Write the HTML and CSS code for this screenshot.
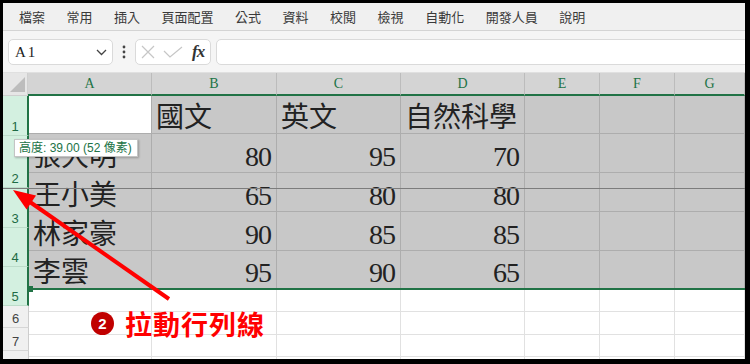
FILE: index.html
```html
<!DOCTYPE html>
<html lang="zh-Hant">

<head>
    <meta charset="UTF-8">
    <meta name="viewport" content="width=device-width, initial-scale=1.0">
    <title>Excel 拉動行列線</title>
    <link rel="stylesheet" href="styles.css">
</head>

<body>
    <div class="shot">
        <div class="app">
            <nav class="ribbon">
                <span>檔案</span>
                <span>常用</span>
                <span>插入</span>
                <span>頁面配置</span>
                <span>公式</span>
                <span>資料</span>
                <span>校閱</span>
                <span>檢視</span>
                <span>自動化</span>
                <span>開發人員</span>
                <span>說明</span>
            </nav>

            <div class="formula-bar">
                <div class="name-box">
                    <span class="ref">A1</span>
                    <svg width="11" height="7" viewBox="0 0 11 7">
                        <path d="M1 1 L5.5 5.5 L10 1" fill="none" stroke="#444" stroke-width="1.3" />
                    </svg>
                </div>
                <div class="dots">
                    <svg width="4" height="14" viewBox="0 0 4 14">
                        <circle cx="2" cy="2" r="1.4" fill="#444" />
                        <circle cx="2" cy="7" r="1.4" fill="#444" />
                        <circle cx="2" cy="12" r="1.4" fill="#444" />
                    </svg>
                </div>
                <div class="fn-box">
                    <svg class="cancel" width="14" height="14" viewBox="0 0 14 14">
                        <path d="M1 1 L13 13 M13 1 L1 13" stroke="#c6c6c6" stroke-width="1.2" />
                    </svg>
                    <svg class="enter" width="20" height="12" viewBox="0 0 20 12">
                        <path d="M1 5 L7 11 L19 1" fill="none" stroke="#c6c6c6" stroke-width="1.2" />
                    </svg>
                    <span class="fx">fx</span>
                </div>
                <div class="fn-input"></div>
            </div>

            <div class="sheet">
                <div class="col-heads">
                    <div class="corner">
                        <svg width="26" height="21" viewBox="0 0 26 21">
                            <polygon points="7,19 22,4 22,19" fill="#bdbdbd" />
                        </svg>
                    </div>
                    <div class="ch">A</div>
                    <div class="ch">B</div>
                    <div class="ch">C</div>
                    <div class="ch">D</div>
                    <div class="ch">E</div>
                    <div class="ch">F</div>
                    <div class="ch">G</div>
                </div>

                <div class="body">
                    <div class="row-heads">
                        <div class="rh on h40">1</div>
                        <div class="rh on h52">2</div>
                        <div class="rh on h40">3</div>
                        <div class="rh on h39">4</div>
                        <div class="rh on h39">5</div>
                        <div class="rh h22">6</div>
                        <div class="rh h23">7</div>
                        <div class="rh h22">8</div>
                    </div>

                    <div class="cells">
                        <div class="sel">
                            <div class="row h38">
                                <div class="c active"></div>
                                <div class="c t">國文</div>
                                <div class="c t">英文</div>
                                <div class="c t">自然科學</div>
                                <div class="c"></div>
                                <div class="c"></div>
                                <div class="c"></div>
                            </div>
                            <div class="row h39">
                                <div class="c t">張大明</div>
                                <div class="c n">80</div>
                                <div class="c n">95</div>
                                <div class="c n">70</div>
                                <div class="c"></div>
                                <div class="c"></div>
                                <div class="c"></div>
                            </div>
                            <div class="row h39">
                                <div class="c t">王小美</div>
                                <div class="c n">65</div>
                                <div class="c n">80</div>
                                <div class="c n">80</div>
                                <div class="c"></div>
                                <div class="c"></div>
                                <div class="c"></div>
                            </div>
                            <div class="row h39">
                                <div class="c t">林家豪</div>
                                <div class="c n">90</div>
                                <div class="c n">85</div>
                                <div class="c n">85</div>
                                <div class="c"></div>
                                <div class="c"></div>
                                <div class="c"></div>
                            </div>
                            <div class="row h37">
                                <div class="c t">李雲</div>
                                <div class="c n">95</div>
                                <div class="c n">90</div>
                                <div class="c n">65</div>
                                <div class="c"></div>
                                <div class="c"></div>
                                <div class="c"></div>
                            </div>
                        </div>
                        <div class="rest">
                            <div class="row h22">
                                <div class="c"></div><div class="c"></div><div class="c"></div><div class="c"></div>
                                <div class="c"></div><div class="c"></div><div class="c"></div>
                            </div>
                            <div class="row h23">
                                <div class="c"></div><div class="c"></div><div class="c"></div><div class="c"></div>
                                <div class="c"></div><div class="c"></div><div class="c"></div>
                            </div>
                            <div class="row h22">
                                <div class="c"></div><div class="c"></div><div class="c"></div><div class="c"></div>
                                <div class="c"></div><div class="c"></div><div class="c"></div>
                            </div>
                            <div class="row h22">
                                <div class="c"></div><div class="c"></div><div class="c"></div><div class="c"></div>
                                <div class="c"></div><div class="c"></div><div class="c"></div>
                            </div>
                        </div>
                    </div>
                </div>
            </div>
        </div>

        <!-- drag feedback and annotation -->
        <div class="drag-line"></div>
        <div class="handle"></div>
        <div class="tip">高度: 39.00 (52 像素)</div>

        <svg class="arrow" width="750" height="364" viewBox="0 0 750 364">
            <line x1="169" y1="299" x2="30" y2="202" stroke="#ff0000" stroke-width="4" />
            <polygon points="13,190 26.6,209.6 36,195.6" fill="#ff0000" />
        </svg>

        <div class="callout">
            <span class="badge">2</span>
            <span class="label">拉動行列線</span>
        </div>
    </div>
</body>

</html>
```

FILE: styles.css
```css
body {
    margin: 0;
    background: #000;
}

.shot {
    position: relative;
    width: 750px;
    height: 364px;
    padding: 3px 5px 5px 3px;
    box-sizing: border-box;
    background: #000;
    overflow: hidden;
}

.app {
    width: 742px;
    height: 356px;
    background: #fff;
    overflow: hidden;
}

/* ribbon tabs */
.ribbon {
    height: 27px;
    display: flex;
    align-items: center;
    gap: 21.5px;
    padding-left: 16px;
    background: #f0f0f0;
    border-bottom: 1px solid #d4d4d4;
    font: 13px "Noto Sans CJK TC", sans-serif;
    color: #3a3a3a;
}

/* formula bar */
.formula-bar {
    height: 42px;
    box-sizing: border-box;
    display: flex;
    align-items: flex-start;
    padding: 8px 0 0 5px;
    background: #f5f5f5;
    border-bottom: 1px solid #e0e0e0;
}

.name-box,
.fn-box,
.fn-input {
    height: 26px;
    box-sizing: border-box;
    background: #fff;
    border: 1px solid #dadada;
    border-radius: 5px;
}

.name-box {
    width: 105px;
    display: flex;
    align-items: center;
    justify-content: space-between;
    padding: 0 5px 0 6px;
}

.ref {
    font: 15px "Liberation Serif", serif;
    letter-spacing: 2px;
    color: #222;
}

.dots {
    width: 22px;
    height: 26px;
    display: flex;
    align-items: center;
    justify-content: center;
}

.fn-box {
    width: 76px;
    display: flex;
    align-items: center;
    padding-left: 5px;
}

.enter {
    margin-left: 8px;
}

.fx {
    margin-left: 9px;
    font: italic bold 17px "Liberation Serif", serif;
    color: #333;
    letter-spacing: -1px;
}

.fn-input {
    flex: 1;
    margin-left: 5px;
    margin-right: -8px;
}

/* sheet */
.col-heads {
    display: grid;
    grid-template-columns: 25px 124px 125px 124px 124px 75px 75px 1fr;
    height: 23px;
}

.corner {
    background: #e6e6e6;
    border-bottom: 1px solid #cfcfcf;
    border-right: 1px solid #cfcfcf;
    box-sizing: border-box;
    overflow: hidden;
}

.corner svg {
    display: block;
}

.ch {
    box-sizing: border-box;
    background: #d4d4d4;
    border-right: 1px solid #bcbcbc;
    border-bottom: 2px solid #217346;
    display: flex;
    align-items: center;
    justify-content: center;
    font: 14px "Liberation Serif", serif;
    color: #217346;
}

.body {
    display: flex;
}

.row-heads {
    width: 26px;
    flex: none;
}

.rh {
    box-sizing: border-box;
    display: flex;
    align-items: flex-end;
    justify-content: center;
    padding-bottom: 2px;
    background: #f0f0f0;
    border-bottom: 1px solid #d6d6d6;
    border-right: 1px solid #cdcdcd;
    font: 13px/1 "Liberation Sans", sans-serif;
    color: #444;
}

.rh.on {
    background: #d3f0e0;
    color: #1e6b45;
    border-bottom-color: #bcdcca;
    border-right: 2px solid #217346;
}

.cells {
    flex: 1;
}

.sel {
    border-bottom: 2px solid #217346;
}

.row {
    display: grid;
    grid-template-columns: 123px 125px 124px 124px 75px 75px 1fr;
    box-sizing: border-box;
}

.c {
    box-sizing: border-box;
    border-right: 1px solid #e1e1e1;
    border-bottom: 1px solid #e1e1e1;
    display: flex;
    align-items: flex-end;
    white-space: nowrap;
    overflow: hidden;
    color: #222;
}

.sel .c {
    background: #c8c8c8;
    border-color: #adadad;
}

.sel .row:last-child .c {
    border-bottom: none;
}

.sel .c.active {
    background: #fff;
}

.t {
    padding: 0 0 4px 4px;
    font: 28px/1 "Noto Sans CJK TC", sans-serif;
}

.n {
    justify-content: flex-end;
    padding: 0 5px 1px 0;
    font: 28px/1 "Liberation Serif", serif;
    letter-spacing: -1px;
}

.h22 { height: 22px; }
.h23 { height: 23px; }
.h37 { height: 37px; }
.h38 { height: 38px; }
.h39 { height: 39px; }
.h40 { height: 40px; }
.h52 { height: 52px; }

/* overlays */
.drag-line {
    position: absolute;
    left: 3px;
    top: 188px;
    width: 742px;
    height: 1px;
    background: #7c7c7c;
}

.handle {
    position: absolute;
    left: 27px;
    top: 286px;
    width: 6px;
    height: 6px;
    background: #217346;
}

.tip {
    position: absolute;
    left: 14px;
    top: 139px;
    width: 124px;
    height: 18px;
    box-sizing: border-box;
    padding-left: 4px;
    background: #fff;
    border: 1px solid #c4c4c4;
    box-shadow: 1px 1px 2px rgba(0, 0, 0, 0.25);
    font: 12px/16px "Liberation Sans", "Noto Sans CJK TC", sans-serif;
    color: #217346;
    white-space: nowrap;
}

.arrow {
    position: absolute;
    left: 0;
    top: 0;
    pointer-events: none;
}

.callout {
    position: absolute;
    left: 91px;
    top: 309px;
    height: 28px;
    display: flex;
    align-items: center;
}

.badge {
    width: 23px;
    height: 23px;
    border-radius: 50%;
    background: #c00000;
    color: #fff;
    display: flex;
    align-items: center;
    justify-content: center;
    font: bold 15px "Liberation Sans", sans-serif;
}

.label {
    margin-left: 11px;
    font: bold 27px/1 "Noto Sans CJK TC", sans-serif;
    letter-spacing: 1px;
    color: #ff0000;
}
```
